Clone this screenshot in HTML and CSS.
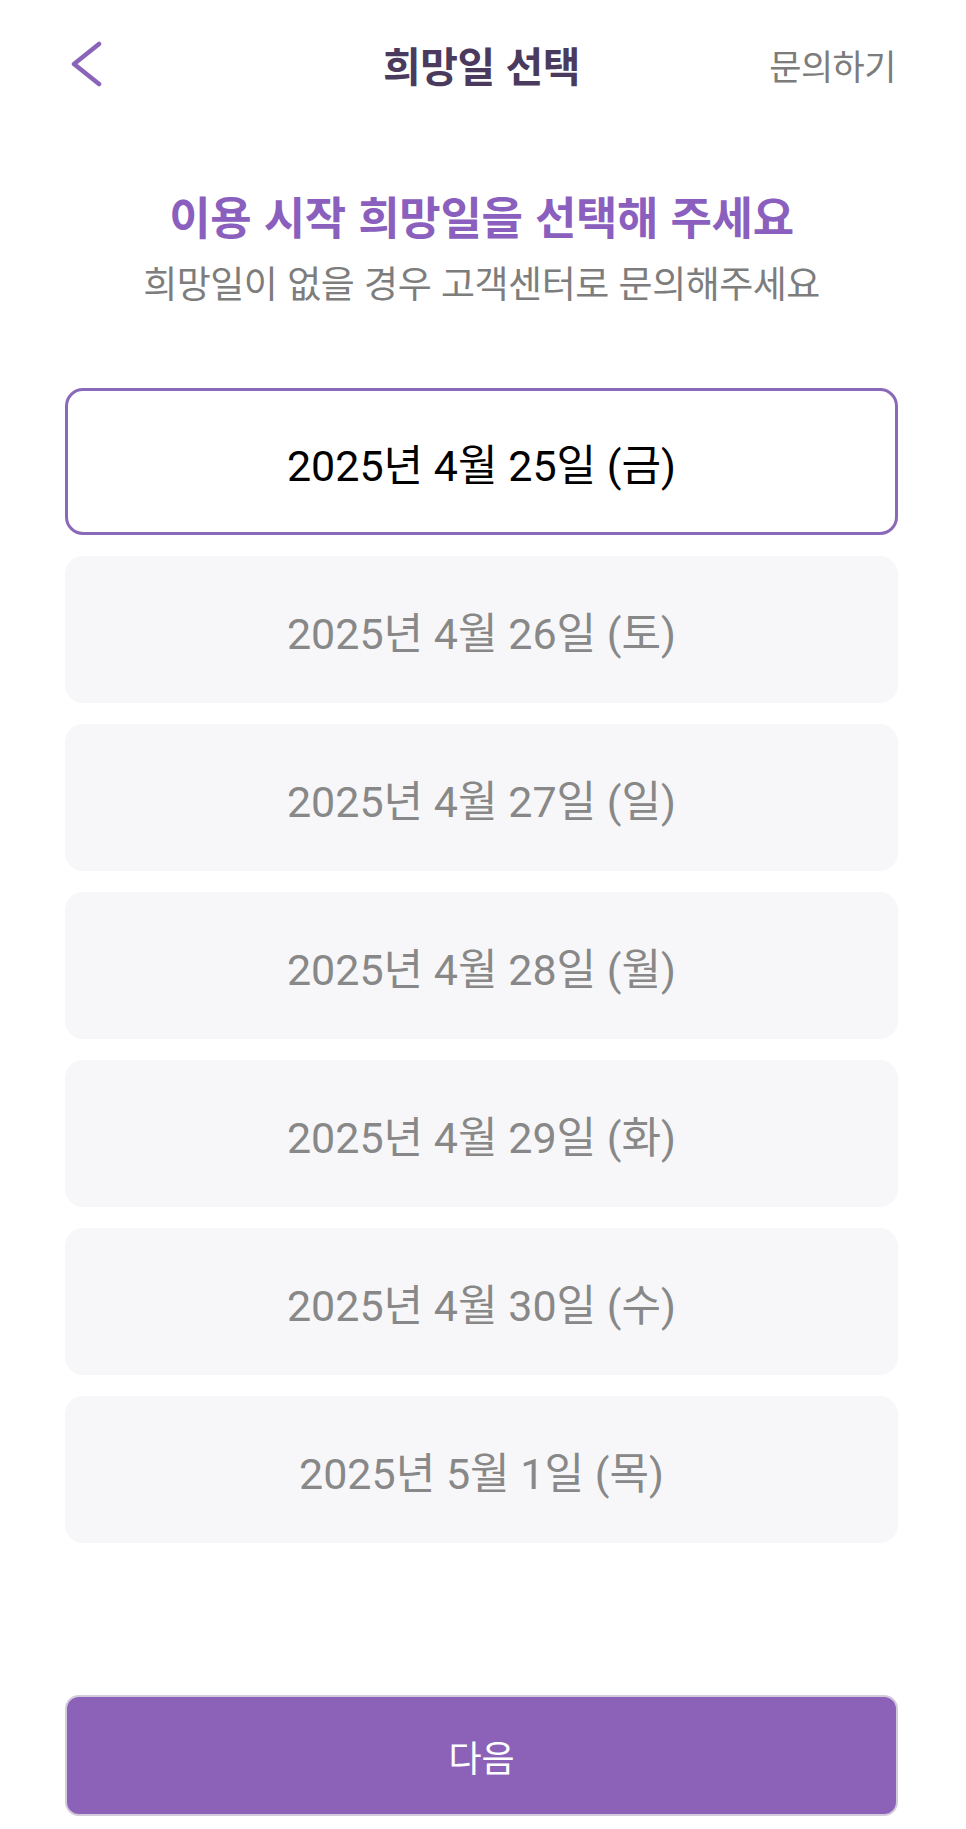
FILE: index.html
```html
<!DOCTYPE html>
<html lang="ko">
<head>
<meta charset="utf-8">
<title>희망일 선택</title>
<link rel="stylesheet" href="styles.css">
</head>
<body>
<div class="page">
  <header class="topbar">
    <button class="back" aria-label="뒤로">
      <svg width="34" height="46" viewBox="0 0 34 46"><path d="M30 3 L5 23 L30 43" fill="none" stroke="#8b63b9" stroke-width="4.5" stroke-linecap="round" stroke-linejoin="round"/></svg>
    </button>
    <h1 class="topbar-title">희망일 선택</h1>
    <a class="topbar-link">문의하기</a>
  </header>

  <section class="intro">
    <h2 class="intro-title">이용 시작 희망일을 선택해 주세요</h2>
    <p class="intro-sub">희망일이 없을 경우 고객센터로 문의해주세요</p>
  </section>

  <ul class="dates">
    <li class="date date-selected">2025년 4월 25일 (금)</li>
    <li class="date">2025년 4월 26일 (토)</li>
    <li class="date">2025년 4월 27일 (일)</li>
    <li class="date">2025년 4월 28일 (월)</li>
    <li class="date">2025년 4월 29일 (화)</li>
    <li class="date">2025년 4월 30일 (수)</li>
    <li class="date">2025년 5월 1일 (목)</li>
  </ul>

  <button class="next">다음</button>
</div>
</body>
</html>
```

FILE: styles.css
```css
* { box-sizing: border-box; }
html, body { margin: 0; padding: 0; background: #ffffff; }
body { font-family: "Noto Sans CJK KR", "Noto Sans", sans-serif; }

.page {
  width: 966px;
  display: flex;
  flex-direction: column;
  padding: 0 68px 0 65px;
}

.topbar {
  height: 128px;
  display: grid;
  grid-template-columns: 1fr auto 1fr;
  align-items: center;
}
.back {
  justify-self: start;
  border: 0;
  background: none;
  padding: 0;
  margin: 0 0 0 4px;
  width: 34px;
  height: 46px;
  display: flex;
}
.topbar-title {
  margin: 0;
  font-size: 41px;
  font-weight: 700;
  color: #4a3b5e;
  line-height: 1;
  letter-spacing: -0.5px;
}
.topbar-link {
  justify-self: end;
  font-size: 35px;
  color: #7c7c7c;
  line-height: 1;
  margin-right: 2px;
  letter-spacing: -0.5px;
}

.intro {
  margin-top: 62px;
  display: flex;
  flex-direction: column;
  align-items: center;
  gap: 17px;
}
.intro-title {
  margin: 0;
  font-size: 45px;
  line-height: 52px;
  font-weight: 700;
  color: #8a5fbe;
  letter-spacing: -0.3px;
}
.intro-sub {
  margin: 0;
  font-size: 37px;
  line-height: 46px;
  color: #7d7d7d;
  letter-spacing: -0.5px;
}

.dates {
  list-style: none;
  margin: 83px 0 0;
  padding: 0;
  display: flex;
  flex-direction: column;
  gap: 21px;
}
.date {
  height: 147px;
  border: 3px solid transparent;
  border-radius: 18px;
  background: #f7f7f9;
  display: flex;
  align-items: center;
  justify-content: center;
  font-family: "Roboto", "Noto Sans CJK KR", sans-serif;
  font-size: 43px;
  color: #888888;
}
.date-selected {
  background: #ffffff;
  border-color: #8b69b9;
  color: #000000;
}

.next {
  margin-top: 152px;
  height: 121px;
  border: 2px solid #d3cadc;
  border-radius: 14px;
  background: #8c62b9;
  color: #ffffff;
  font-family: "Noto Sans CJK KR", sans-serif;
  font-size: 36px;
  padding: 0;
}
```
